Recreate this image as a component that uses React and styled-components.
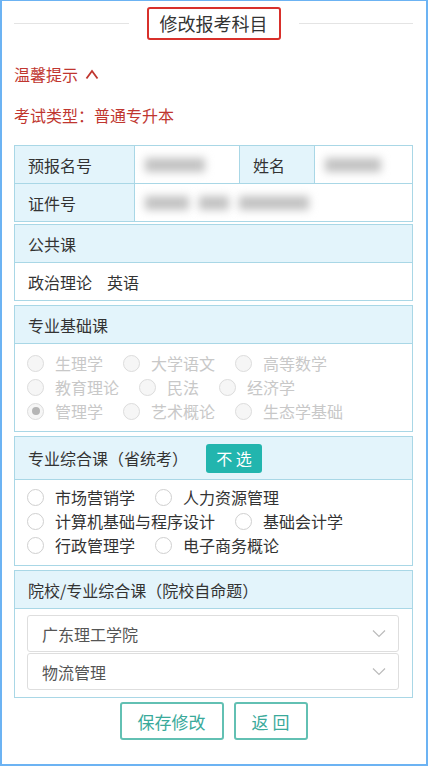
import React from "react"
import styled, { createGlobalStyle } from 'styled-components';

const GlobalStyle = createGlobalStyle`
  html, body { margin: 0; padding: 0; background: #fff; }
  body {
    font-family: "Noto Sans CJK SC", "Noto Sans", sans-serif;
    color: #333;
  }
`

const basics = [
  [{ name: '生理学' }, { name: '大学语文' }, { name: '高等数学' }],
  [{ name: '教育理论' }, { name: '民法' }, { name: '经济学' }],
  [{ name: '管理学', checked: true }, { name: '艺术概论' }, { name: '生态学基础' }],
]

const combos = [
  ['市场营销学', '人力资源管理'],
  ['计算机基础与程序设计', '基础会计学'],
  ['行政管理学', '电子商务概论'],
]

const Radio = ({ label, checked, disabled }) => (
  <RadioItem disabled={disabled}>
    <Circle disabled={disabled}>{checked && <Dot />}</Circle>
    {label}
  </RadioItem>
)

const Chevron = () => (
  <svg width="14" height="9" viewBox="0 0 14 9">
    <path d="M1 1.5 L7 7.5 L13 1.5" fill="none" stroke="#bbb" strokeWidth="1.2" />
  </svg>
)

const CaretUp = () => (
  <svg width="14" height="11" viewBox="0 0 14 11">
    <path d="M1.5 9.5 L7 2 L12.5 9.5" fill="none" stroke="#c0362f" strokeWidth="1.8" />
  </svg>
)

const App = () => {
  return (
    <>
      <GlobalStyle />
      <Frame>
        <TitleBar>
          <Rule />
          <Title>修改报考科目</Title>
          <Rule />
        </TitleBar>

        <Notice top={24}>温馨提示 <CaretUp /></Notice>
        <Notice top={21}>考试类型：普通专升本</Notice>

        <InfoTable>
          <Label>预报名号</Label>
          <Value><Blur w={60} /></Value>
          <Label>姓名</Label>
          <Value last><Blur w={56} /></Value>
          <Label bottom>证件号</Label>
          <Value bottom last span={3}>
            <Blur w={44} />
            <Blur w={30} />
            <Blur w={70} />
          </Value>
        </InfoTable>

        <Panel>
          <PanelHead>公共课</PanelHead>
          <PlainBody>政治理论<Spaced>英语</Spaced></PlainBody>
        </Panel>

        <Panel>
          <PanelHead>专业基础课</PanelHead>
          <RadioBody>
            {basics.map((row, i) => (
              <RadioRow key={i}>
                {row.map(item => (
                  <Radio key={item.name} label={item.name} checked={item.checked} disabled />
                ))}
              </RadioRow>
            ))}
          </RadioBody>
        </Panel>

        <Panel>
          <PanelHead tall>
            专业综合课（省统考）
            <SkipButton>不 选</SkipButton>
          </PanelHead>
          <RadioBody tight>
            {combos.map((row, i) => (
              <RadioRow key={i}>
                {row.map(name => <Radio key={name} label={name} />)}
              </RadioRow>
            ))}
          </RadioBody>
        </Panel>

        <Panel>
          <PanelHead>院校/专业综合课（院校自命题）</PanelHead>
          <SelectBody>
            <Select>广东理工学院<Chevron /></Select>
            <Select>物流管理<Chevron /></Select>
          </SelectBody>
        </Panel>

        <Actions>
          <ActionButton w={104}>保存修改</ActionButton>
          <ActionButton w={74}>返 回</ActionButton>
        </Actions>
      </Frame>
    </>
  )
}

export default App

const Frame = styled.div`
  box-sizing: border-box;
  width: 428px;
  height: 766px;
  border: 2px solid #6cb3f3;
  border-top-width: 1px;
  padding: 6px 13px 0 12px;
`

const TitleBar = styled.div`
  display: flex;
  align-items: center;
  gap: 18px;
  height: 33px;
`

const Rule = styled.div`
  flex: 1;
  height: 1px;
  background: #e4e4e4;
`

const Title = styled.div`
  box-sizing: border-box;
  height: 33px;
  width: 134px;
  border: 2px solid #d8302b;
  border-radius: 3px;
  font-size: 18px;
  line-height: 28px;
  text-align: center;
  color: #333;
`

const Notice = styled.div`
  display: flex;
  align-items: center;
  gap: 7px;
  color: #c0362f;
  font-size: 16px;
  line-height: 20px;
  margin-top: ${p => p.top}px;
`

const InfoTable = styled.div`
  display: grid;
  grid-template-columns: 120px 105px 75px 1fr;
  margin: 20px 0 2px;
  border: 1px solid #a9d7e6;
`

const Label = styled.div`
  height: 37px;
  display: flex;
  align-items: center;
  padding-left: 13px;
  font-size: 16px;
  background: #e3f4fb;
  border-right: 1px solid #a9d7e6;
  border-bottom: ${p => (p.bottom ? 'none' : '1px solid #a9d7e6')};
`

const Value = styled.div`
  height: 37px;
  display: flex;
  align-items: center;
  gap: 10px;
  padding-left: 10px;
  grid-column: span ${p => p.span || 1};
  border-right: ${p => (p.last ? 'none' : '1px solid #a9d7e6')};
  border-bottom: ${p => (p.bottom ? 'none' : '1px solid #a9d7e6')};
`

const Blur = styled.span`
  display: inline-block;
  width: ${p => p.w}px;
  height: 14px;
  background: #c2c2c2;
  filter: blur(4px);
`

const Panel = styled.div`
  border: 1px solid #a9d7e6;
  margin-bottom: 4px;
`

const PanelHead = styled.div`
  display: flex;
  align-items: center;
  gap: 18px;
  height: ${p => (p.tall ? 42 : 37)}px;
  padding-left: 13px;
  font-size: 16px;
  background: #e3f4fb;
  border-bottom: 1px solid #a9d7e6;
`

const SkipButton = styled.span`
  width: 56px;
  height: 29px;
  border-radius: 3px;
  background: #22b5ae;
  color: #fff;
  font-size: 16px;
  line-height: 29px;
  text-align: center;
`

const PlainBody = styled.div`
  height: 37px;
  display: flex;
  align-items: center;
  padding-left: 13px;
  font-size: 16px;
`

const Spaced = styled.span`
  margin-left: 15px;
`

const RadioBody = styled.div`
  padding: ${p => (p.tight ? '5px 12px 8px' : '7px 12px 8px')};
`

const RadioRow = styled.div`
  display: flex;
  align-items: center;
  height: 24px;
`

const RadioItem = styled.label`
  display: flex;
  align-items: center;
  gap: 11px;
  margin-right: 20px;
  font-size: 16px;
  color: ${p => (p.disabled ? '#c8c8c8' : '#333')};
`

const Circle = styled.span`
  box-sizing: border-box;
  width: 17px;
  height: 17px;
  border-radius: 50%;
  border: 1px solid ${p => (p.disabled ? '#dcdcdc' : '#cfcfcf')};
  background: ${p => (p.disabled ? '#f6f6f6' : '#fff')};
  display: flex;
  align-items: center;
  justify-content: center;
`

const Dot = styled.span`
  width: 8px;
  height: 8px;
  border-radius: 50%;
  background: #b5b5b5;
`

const SelectBody = styled.div`
  display: flex;
  flex-direction: column;
  gap: 1px;
  padding: 6px 13px 7px 12px;
`

const Select = styled.div`
  box-sizing: border-box;
  height: 37px;
  display: flex;
  align-items: center;
  justify-content: space-between;
  padding: 0 12px 0 14px;
  border: 1px solid #dedede;
  border-radius: 3px;
  font-size: 16px;
  color: #555;
`

const Actions = styled.div`
  display: flex;
  justify-content: center;
  gap: 10px;
  margin-top: 4px;
`

const ActionButton = styled.button`
  box-sizing: border-box;
  width: ${p => p.w}px;
  height: 38px;
  background: #fff;
  border: 2px solid #62c0b3;
  border-radius: 3px;
  color: #3aaa9b;
  font-family: inherit;
  font-size: 17px;
  padding: 0;
`
